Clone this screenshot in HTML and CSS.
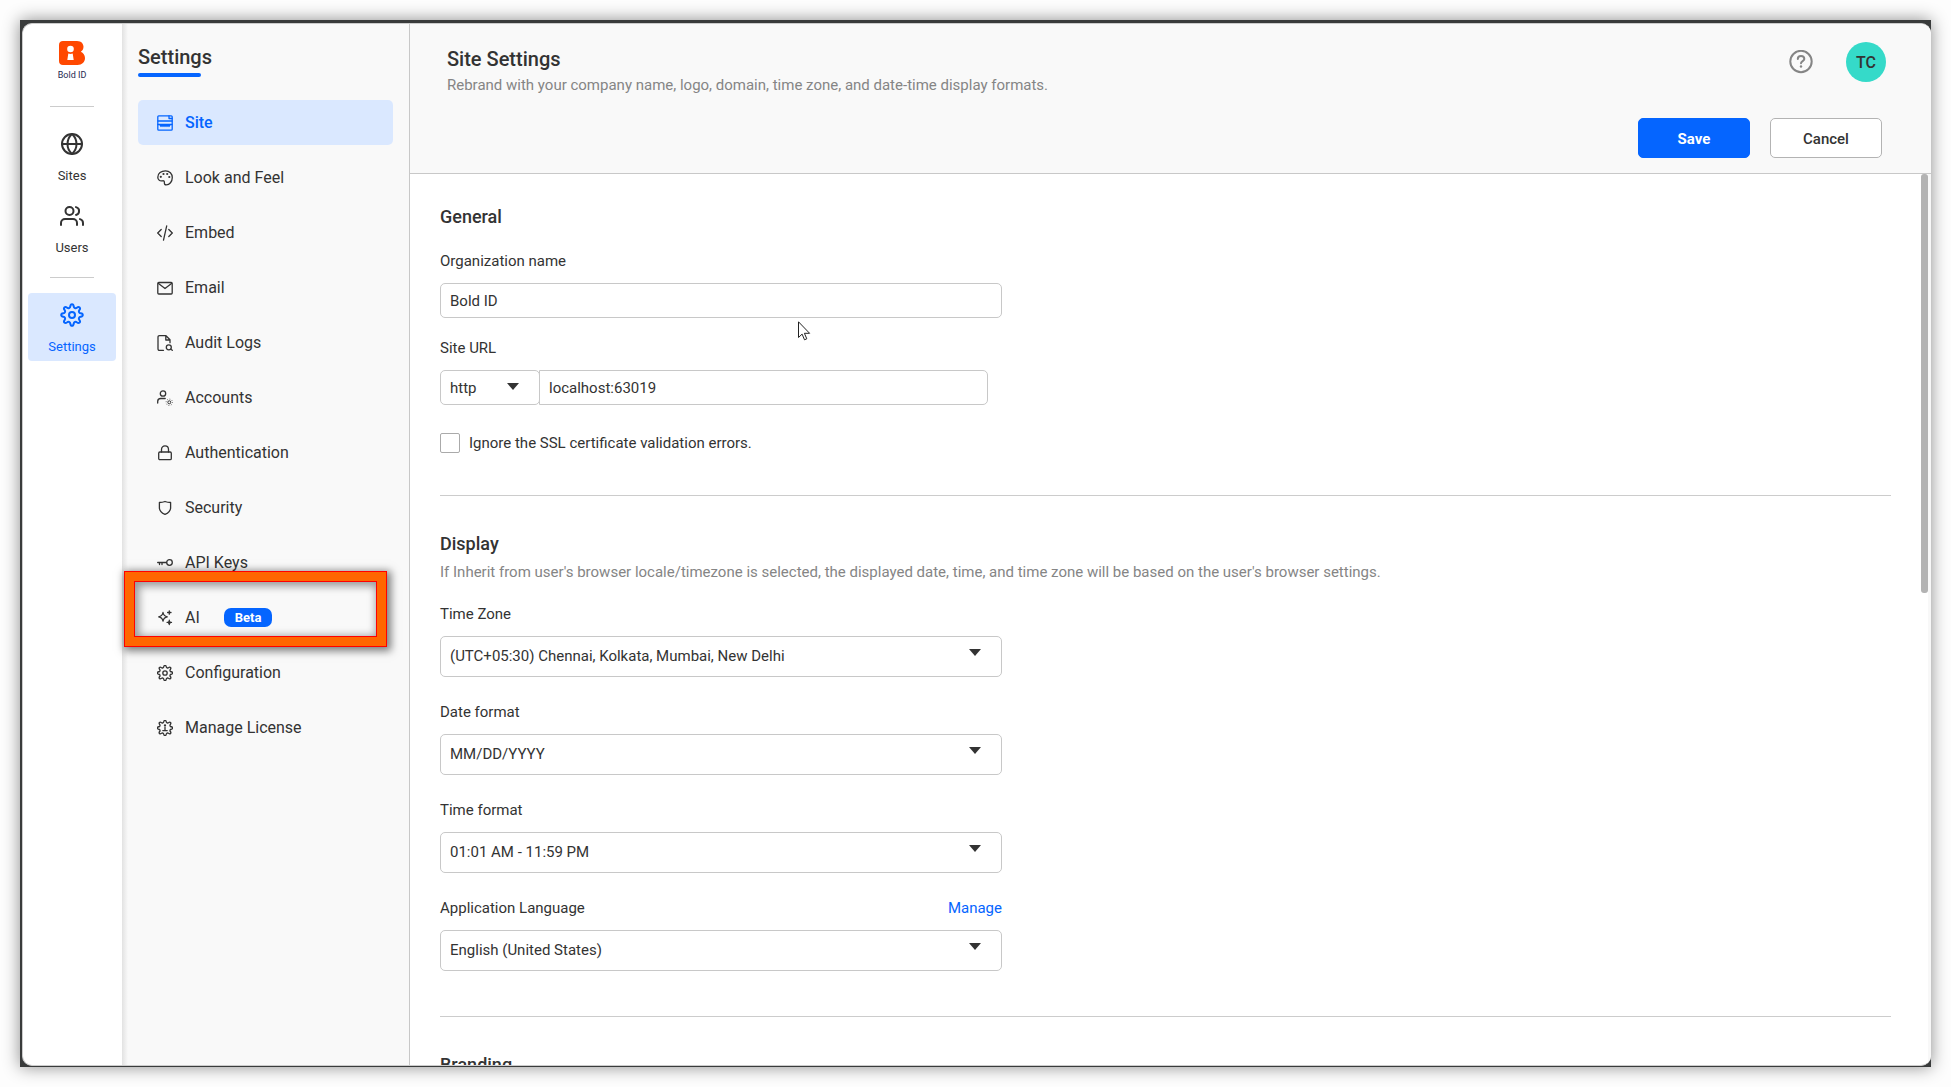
FILE: index.html
```html
<!DOCTYPE html>
<html lang="en">
<head>
<meta charset="utf-8">
<meta name="viewport" content="width=device-width, initial-scale=1">
<title>Site Settings - Bold ID</title>
<link rel="stylesheet" href="styles.css">
</head>
<body>
<div class="window">
  <div class="app">
    <nav class="rail" aria-label="Main">
      <a class="brand" href="#">
        <svg width="26" height="24" viewBox="0 0 26 24" aria-hidden="true">
          <path fill="#ff4800" d="M4 0h14c4.500 0 6.500 2.800 6.500 5.800 0 2.300-1 3.800-2.700 4.900C24.300 11.800 26 14 26 17c0 4-3 7-7.500 7H4c-2.500 0-4-1.500-4-4V4c0-2.500 1.500-4 4-4z"/>
          <circle cx="11.500" cy="8" r="3.300" fill="#fff"/>
          <path fill="#fff" d="M9.300 12.500c1.500.6 3 .6 4.400 0l1 6.500H8.300z"/>
        </svg>
        <span>Bold ID</span>
      </a>
      <hr class="rail-line">
      <a class="rail-item" href="#">
        <svg class="ico-lg" viewBox="0 0 24 24" aria-hidden="true"><circle cx="12" cy="12" r="10"/><path d="M2 12h20M12 2c3 2.700 4.500 6 4.500 10S15 19.300 12 22c-3-2.700-4.500-6-4.500-10S9 4.700 12 2z"/></svg>
        <span>Sites</span>
      </a>
      <a class="rail-item" href="#">
        <svg class="ico-lg" viewBox="0 0 24 24" aria-hidden="true"><circle cx="9.500" cy="7" r="4"/><path d="M1 21v-2a4 4 0 0 1 4-4h8a4 4 0 0 1 4 4v2M23 21v-2a4 4 0 0 0-3-3.900M16 3.100a4 4 0 0 1 0 7.800"/></svg>
        <span>Users</span>
      </a>
      <hr class="rail-line">
      <a class="rail-item active" href="#" aria-current="page">
        <svg class="ico-lg" viewBox="0 0 24 24" aria-hidden="true"><circle cx="12" cy="12" r="3"/><path d="M10.300 3.400C10.600 .5 13.400 .5 13.700 3.400a1.900 1.900 0 0 0 3.100 1.300c2.300-1.800 4.300 .2 2.500 2.500a1.900 1.900 0 0 0 1.300 3.100c2.900.3 2.900 3.100 0 3.400a1.900 1.900 0 0 0-1.300 3.100c1.800 2.300-.2 4.300-2.500 2.500a1.900 1.900 0 0 0-3.100 1.300c-.3 2.900-3.100 2.900-3.400 0a1.900 1.900 0 0 0-3.100-1.300c-2.300 1.800-4.300-.2-2.500-2.500a1.900 1.900 0 0 0-1.300-3.100c-2.900-.3-2.900-3.100 0-3.400a1.900 1.900 0 0 0 1.300-3.100C2.900 4.900 4.900 2.900 7.200 4.700a1.900 1.900 0 0 0 3.100-1.300z"/></svg>
        <span>Settings</span>
      </a>
    </nav>

    <aside class="panel">
      <h2 class="panel-title">Settings</h2>
      <nav class="menu" aria-label="Settings">
        <a class="menu-item active" href="#" aria-current="page">
          <svg class="ico" viewBox="0 0 16 16" aria-hidden="true"><rect x=".8" y=".8" width="14.400" height="14.400" rx="1"/><path d="M1 6h14M1 9.500h14M12 1v2.500h3M3 10l1 1.500L5 10l1 1.500L7 10l1 1.500L9 10l1 1.500 1-1.500 1 1.500 1-1.500"/></svg>
          <span>Site</span>
        </a>
        <a class="menu-item" href="#">
          <svg class="ico" viewBox="0 0 16 16" aria-hidden="true"><path d="M8.500.8c4 0 6.800 2.900 6.800 6.800 0 4-2.800 7.300-6 7.300-1.600 0-2-1-1.900-2.200.1-1.500-.6-2.200-2-1.900C3.100 11.300.8 10.200.8 7.200.8 3.400 4.200.8 8.500.8z"/><circle class="dot" cx="3.800" cy="6.800" r="1.100"/><circle class="dot" cx="6.500" cy="4" r="1.100"/><circle class="dot" cx="10.200" cy="4" r="1.100"/><circle class="dot" cx="12.300" cy="7" r="1.100"/></svg>
          <span>Look and Feel</span>
        </a>
        <a class="menu-item" href="#">
          <svg class="ico" viewBox="0 0 16 16" aria-hidden="true"><path d="M4.200 4.500.7 8l3.500 3.500M11.800 4.500 15.300 8l-3.500 3.500M9.700.8 6.500 15.200"/></svg>
          <span>Embed</span>
        </a>
        <a class="menu-item" href="#">
          <svg class="ico" viewBox="0 0 16 16" aria-hidden="true"><rect x=".8" y="2.500" width="14.400" height="11.500" rx="1"/><path d="m1.500 3.500 6.500 5 6.500-5"/></svg>
          <span>Email</span>
        </a>
        <a class="menu-item" href="#">
          <svg class="ico" viewBox="0 0 16 16" aria-hidden="true"><path d="M6.500 15.300h-4c-1 0-1.500-.5-1.500-1.500V2.200C1 1.200 1.500.7 2.500.7H9l4 4v3M8.800 1v4H13"/><circle cx="11.800" cy="12.300" r="2.500"/><path d="M13.800 14.200 15.300 15.300"/></svg>
          <span>Audit Logs</span>
        </a>
        <a class="menu-item" href="#">
          <svg class="ico" viewBox="0 0 16 16" aria-hidden="true"><circle cx="6" cy="3.500" r="2.700"/><path d="M.7 13v-1.500c0-2 1.300-3 3-3h4.500"/><circle class="hair" cx="12.300" cy="12.300" r="1.500"/><circle class="hair" cx="12.300" cy="12.300" r="3.200" stroke-dasharray=".7 1.800"/></svg>
          <span>Accounts</span>
        </a>
        <a class="menu-item" href="#">
          <svg class="ico" viewBox="0 0 16 16" aria-hidden="true"><rect x="1.700" y="7" width="12.600" height="7.700" rx="1.200"/><path d="M4.500 7V4.500C4.500 2.300 6 .9 8 .9s3.500 1.400 3.500 3.600V7"/></svg>
          <span>Authentication</span>
        </a>
        <a class="menu-item" href="#">
          <svg class="ico" viewBox="0 0 16 16" aria-hidden="true"><path d="M8 1.500c1.800.7 3.600 1 5.600 1v5.200c0 3.300-2.100 5.300-5.600 6.700-3.500-1.400-5.600-3.400-5.600-6.700V2.500c2 0 3.800-.3 5.600-1z"/></svg>
          <span>Security</span>
        </a>
        <a class="menu-item" href="#">
          <svg class="ico" viewBox="0 0 16 16" aria-hidden="true"><circle cx="12.500" cy="7.500" r="2.800"/><path d="M9.500 7.500H.7M2.500 7.500v2M5 7.500v2"/></svg>
          <span>API Keys</span>
        </a>
        <a class="menu-item marked" href="#">
          <svg class="ico" viewBox="0 0 16 16" aria-hidden="true"><path d="M6 2.500c.5 2.700 1.600 3.800 4.300 4.300C7.600 7.300 6.500 8.400 6 11.100c-.5-2.700-1.600-3.800-4.300-4.300C4.400 6.300 5.500 5.200 6 2.500zM12.300.8v3.400M10.600 2.500H14M12.300 10.200v4.400M10.100 12.400h4.400"/><circle class="dot" cx="12.300" cy="12.400" r="1.500"/></svg>
          <span>AI</span>
          <span class="badge">Beta</span>
        </a>
        <a class="menu-item" href="#">
          <svg class="ico gear" viewBox="1 1 22 22" aria-hidden="true"><circle cx="12" cy="12" r="3"/><path d="M10.300 3.400C10.600 .9 13.400 .9 13.700 3.400a1.900 1.900 0 0 0 3.100 1.300c2.300-1.800 4.300 .2 2.500 2.500a1.900 1.900 0 0 0 1.300 3.100c2.500.3 2.500 3.100 0 3.400a1.900 1.900 0 0 0-1.300 3.100c1.800 2.300-.2 4.300-2.500 2.500a1.900 1.900 0 0 0-3.100 1.300c-.3 2.500-3.100 2.500-3.400 0a1.900 1.900 0 0 0-3.100-1.300c-2.300 1.800-4.300-.2-2.500-2.500a1.900 1.900 0 0 0-1.300-3.100c-2.500-.3-2.500-3.100 0-3.400a1.900 1.900 0 0 0 1.300-3.100C2.900 4.900 4.900 2.900 7.200 4.700a1.900 1.900 0 0 0 3.100-1.300z"/></svg>
          <span>Configuration</span>
        </a>
        <a class="menu-item" href="#">
          <svg class="ico gear" viewBox="1 1 22 22" aria-hidden="true"><path d="M10.300 3.400C10.600 .9 13.400 .9 13.700 3.400a1.900 1.900 0 0 0 3.100 1.300c2.300-1.800 4.300 .2 2.500 2.500a1.900 1.900 0 0 0 1.300 3.100c2.500.3 2.500 3.100 0 3.400a1.900 1.900 0 0 0-1.300 3.100c1.800 2.300-.2 4.300-2.500 2.500a1.900 1.900 0 0 0-3.100 1.300c-.3 2.500-3.100 2.500-3.400 0a1.900 1.900 0 0 0-3.100-1.300c-2.300 1.800-4.300-.2-2.500-2.500a1.900 1.900 0 0 0-1.300-3.100c-2.500-.3-2.500-3.100 0-3.400a1.900 1.900 0 0 0 1.300-3.100C2.900 4.900 4.900 2.900 7.200 4.700a1.900 1.900 0 0 0 3.100-1.300z"/><circle class="dot" cx="12" cy="8.500" r="1.600"/><path d="M12 11v4M9 15.500h6"/></svg>
          <span>Manage License</span>
        </a>
      </nav>
    </aside>

    <main class="main">
      <header class="header">
        <div class="header-top">
          <div class="heading">
            <h1>Site Settings</h1>
            <p class="hint">Rebrand with your company name, logo, domain, time zone, and date-time display formats.</p>
          </div>
          <div class="tools">
            <button class="help" type="button" aria-label="Help">
              <svg class="ico-lg" viewBox="0 0 24 24" aria-hidden="true"><circle cx="12" cy="11.500" r="10.700"/><path d="M8.800 9c0-1.900 1.400-3 3.200-3s3.300 1.100 3.300 2.900c0 2.200-3.300 2.200-3.300 4.400"/><circle class="dot" cx="12" cy="16.500" r="1.200"/></svg>
            </button>
            <button class="avatar" type="button" aria-label="Account TC">TC</button>
          </div>
        </div>
        <div class="actions">
          <button class="btn primary" type="submit" form="site-form">Save</button>
          <button class="btn" type="button">Cancel</button>
        </div>
      </header>

      <div class="body">
        <form class="content" id="site-form">
          <section class="section">
            <h2>General</h2>
            <div class="field">
              <label for="org">Organization name</label>
              <input class="control" id="org" type="text" value="Bold ID">
            </div>
            <div class="field">
              <label for="host">Site URL</label>
              <div class="url">
                <div class="select scheme">
                  <select class="control" aria-label="Scheme"><option>http</option><option>https</option></select>
                </div>
                <input class="control host" id="host" type="text" value="localhost:63019">
              </div>
            </div>
            <label class="check"><input type="checkbox"><span>Ignore the SSL certificate validation errors.</span></label>
          </section>

          <section class="section display">
            <h2>Display</h2>
            <p class="hint">If Inherit from user's browser locale/timezone is selected, the displayed date, time, and time zone will be based on the user's browser settings.</p>
            <div class="field">
              <label for="tz">Time Zone</label>
              <div class="select"><select class="control" id="tz"><option>(UTC+05:30) Chennai, Kolkata, Mumbai, New Delhi</option></select></div>
            </div>
            <div class="field">
              <label for="df">Date format</label>
              <div class="select"><select class="control" id="df"><option>MM/DD/YYYY</option></select></div>
            </div>
            <div class="field">
              <label for="tf">Time format</label>
              <div class="select"><select class="control" id="tf"><option>01:01 AM - 11:59 PM</option></select></div>
            </div>
            <div class="field">
              <div class="label-row"><label for="lang">Application Language</label><a href="#">Manage</a></div>
              <div class="select"><select class="control" id="lang"><option>English (United States)</option></select></div>
            </div>
          </section>

          <section class="section">
            <h2>Branding</h2>
          </section>
        </form>
        <div class="scrollbar" aria-hidden="true"><div class="thumb"></div></div>
      </div>
    </main>
  </div>
</div>
<svg class="pointer" width="13" height="20" viewBox="0 0 13 20" aria-hidden="true"><path d="M.5.800v15.700l3.600-3.400 2.400 5.700 2.300-1-2.400-5.500h5.200z" fill="#fff" stroke="#222"/></svg>
</body>
</html>
```

FILE: styles.css
```css
* { box-sizing: border-box; }

html, body { height: 100%; }

body {
  margin: 0;
  padding: 20px;
  background: #fdfdfd;
  color: #333;
  font: 15px/20px Roboto, "Liberation Sans", sans-serif;
  overflow: hidden;
}

h1, h2, p { margin: 0; }
h1, h2 { font-weight: 500; }
a { color: inherit; text-decoration: none; }
button, input, select { font: inherit; color: inherit; }

svg { display: block; flex: none; }
.ico, .ico-lg {
  fill: none;
  stroke: currentColor;
  stroke-linecap: round;
  stroke-linejoin: round;
}
.ico { width: 16px; height: 16px; stroke-width: 1.3; }
.ico-lg { width: 24px; height: 24px; stroke-width: 2; }
.gear { stroke-width: 1.8; }
.hair { stroke-width: 1; stroke-linecap: butt; }
.dot { fill: currentColor; stroke: none; }

/* Window frame */
.window {
  height: 100%;
  padding: 3px 0 1px 2px;
  background: #393b3b;
  box-shadow: 0 0 16px rgba(0, 0, 0, 0.45);
}
.app {
  display: flex;
  height: 100%;
  border: 1px solid #ccc;
  border-right: 0;
  border-radius: 10px;
  background: #fff;
  overflow: hidden;
}

/* Icon rail */
.rail {
  flex: none;
  width: 99px;
  display: flex;
  flex-direction: column;
  align-items: center;
  padding-right: 1px;
}
.brand {
  display: flex;
  flex-direction: column;
  align-items: center;
  gap: 4px;
  padding: 17px 0 25px;
  color: #252a50;
  font-size: 9px;
  line-height: 12px;
}
.rail-line {
  width: 44px;
  height: 1px;
  margin: 0 0 15px;
  border: 0;
  background: #ccc;
}
.rail-item {
  display: flex;
  flex-direction: column;
  align-items: center;
  gap: 12px;
  width: 88px;
  padding: 10px 0 6px;
  border-radius: 4px;
  font-size: 13px;
  line-height: 16px;
}
.rail-item + .rail-item { margin-top: 4px; }
.rail-item + .rail-line { margin-top: 15px; }
.active { background: #dae8ff; color: #0565ff; }

/* Settings panel */
.panel {
  flex: none;
  width: 288px;
  padding: 21px 16px 0;
  border-right: 1px solid #c8c8c8;
  background: linear-gradient(to right, #e2e2e2, #f9f9f9 6px);
}
.panel-title {
  font-size: 20px;
  line-height: 24px;
}
.panel-title::after {
  content: "";
  display: block;
  width: 63px;
  height: 4px;
  margin-top: 4px;
  border-radius: 2px;
  background: #0565ff;
}
.menu {
  display: flex;
  flex-direction: column;
  gap: 10px;
  margin-top: 23px;
}
.menu-item {
  display: flex;
  align-items: center;
  gap: 12px;
  height: 45px;
  padding: 0 19px;
  border-radius: 5px;
  font-size: 16px;
  line-height: 22px;
}
.menu-item.active { font-weight: 500; }
.badge {
  margin-left: 12px;
  padding: 0 11px;
  border-radius: 7px;
  background: #0565ff;
  color: #fff;
  font-size: 13px;
  font-weight: 700;
  line-height: 19px;
}

/* Call-out box over the AI entry */
.marked { position: relative; }
.marked::before, .marked::after {
  content: "";
  position: absolute;
  pointer-events: none;
}
.marked::before {
  inset: -24px 6px -7px -14px;
  border: 11px solid #f60;
  outline: 1px solid #f00;
  outline-offset: -1px;
  box-shadow: 2px 2px 8px 2px rgba(0, 0, 0, 0.5);
}
.marked::after {
  inset: -14px 16px 3px -4px;
  border: 1px solid #f00;
  box-shadow: inset 2px 2px 8px 2px rgba(0, 0, 0, 0.4);
}

/* Header */
.main {
  flex: 1;
  min-width: 0;
  display: flex;
  flex-direction: column;
}
.header {
  flex: none;
  padding: 18px 45px 15px 37px;
  border-bottom: 1px solid #c8c8c8;
  background: #f9f9f9;
}
.header-top {
  display: flex;
  justify-content: space-between;
  height: 76px;
}
.heading {
  display: flex;
  flex-direction: column;
  gap: 4px;
  padding-top: 5px;
}
.heading h1 { font-size: 20px; line-height: 24px; }
.hint { color: #858585; }
.tools {
  display: flex;
  align-items: center;
  gap: 33px;
  height: 40px;
}
.help {
  padding: 0;
  border: 0;
  background: none;
  color: #858585;
}
.avatar {
  width: 40px;
  height: 40px;
  padding: 2px 0 0;
  border: 0;
  border-radius: 50%;
  background: #35dac9;
  font-size: 16px;
  font-weight: 500;
}
.actions {
  display: flex;
  justify-content: flex-end;
  gap: 20px;
  padding-right: 4px;
}
.btn {
  width: 112px;
  height: 40px;
  padding: 2px 0 0;
  border: 1px solid #b3b3b3;
  border-radius: 5px;
  background: #fff;
  font-size: 15px;
  font-weight: 500;
}
.primary {
  border-color: #0565ff;
  background: #0565ff;
  color: #fff;
  font-weight: 700;
}

/* Form */
.body {
  flex: 1;
  min-height: 0;
  display: flex;
}
.content {
  flex: 1;
  min-width: 0;
  padding: 31px 30px 0;
  overflow-y: auto;
  scrollbar-width: none;
}
.section + .section {
  padding-top: 36px;
  border-top: 1px solid #ccc;
}
.section h2 { font-size: 18px; line-height: 24px; }
.section h2 + .field { margin-top: 22px; }
.section > .hint { margin-top: 6px; }
.field {
  display: flex;
  flex-direction: column;
  gap: 12px;
  max-width: 562px;
  margin-top: 20px;
}
.display { padding-bottom: 45px; }
.display .field { margin-top: 25px; }
.display .hint + .field { margin-top: 22px; }
.label-row { display: flex; justify-content: space-between; }
.label-row a { color: #0565ff; }
.control {
  width: 100%;
  height: 35px;
  padding: 0 9px;
  border: 1px solid #c8c8c8;
  border-radius: 5px;
  background: #fff;
  appearance: none;
}
.display .control { display: block; height: 41px; padding-bottom: 2px; }
.select { position: relative; }
.select::after {
  content: "";
  position: absolute;
  top: 13px;
  right: 21px;
  border: 6px solid transparent;
  border-top: 7px solid #333;
  border-bottom: 0;
  pointer-events: none;
}
.url { display: flex; max-width: 548px; }
.scheme { flex: none; width: 100px; }
.host { margin-left: -1px; border-radius: 0 5px 5px 0; }
.check {
  display: flex;
  align-items: center;
  gap: 9px;
  margin: 28px 0 42px;
}
.check input {
  width: 20px;
  height: 20px;
  margin: 0;
  border: 1px solid #aaa;
  border-radius: 2px;
  background: #fff;
  appearance: none;
}
.scrollbar {
  flex: none;
  width: 10px;
  border-right: 3px solid #f8f8f8;
}
.thumb {
  height: 47%;
  border-radius: 3px;
  background: #b3b3b3;
}

.pointer {
  position: absolute;
  left: 798px;
  top: 321px;
}
```
